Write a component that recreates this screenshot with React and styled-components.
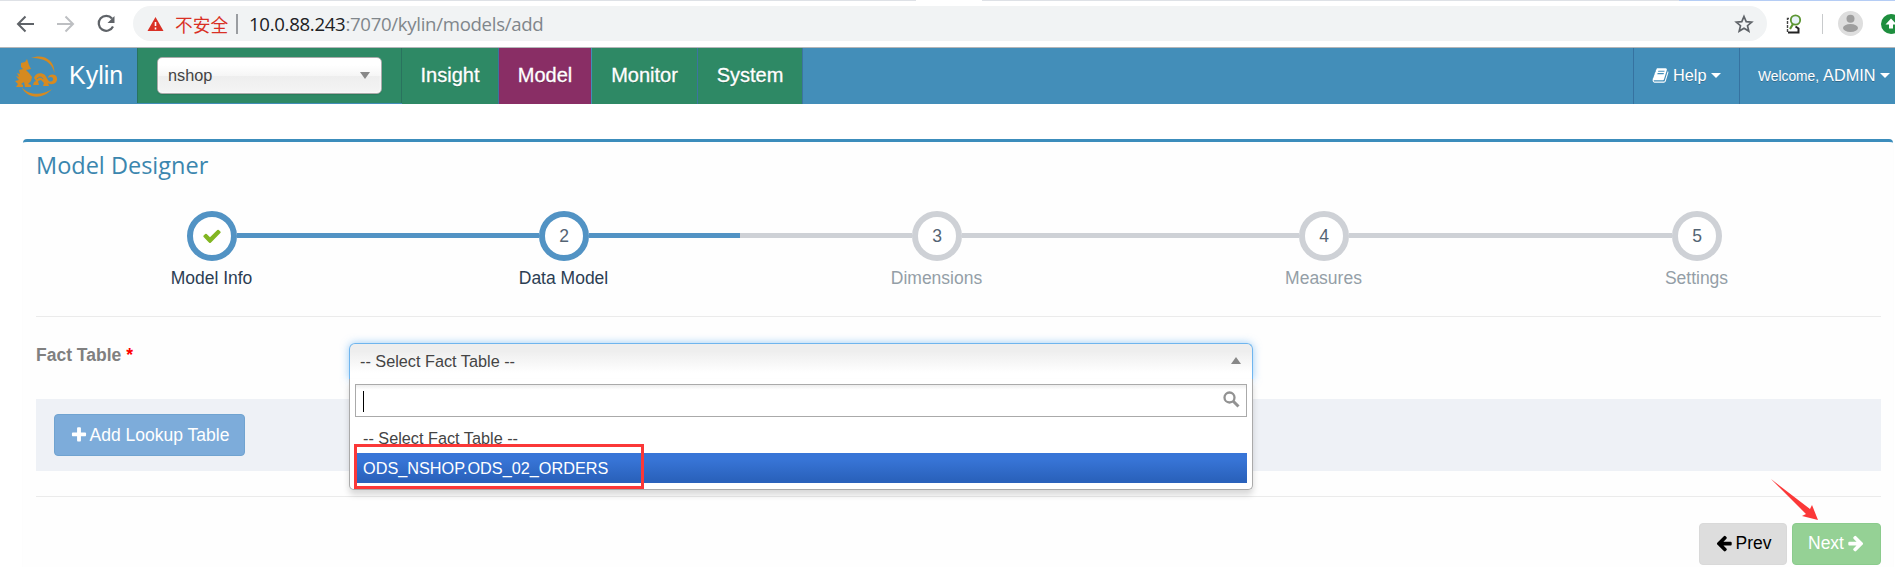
import React from "react";
import styled, { createGlobalStyle, css } from "styled-components";

const Global = createGlobalStyle`
  * { box-sizing: border-box; }
  body { margin: 0; background: #fff; font: 17.5px/25px "Liberation Sans", Arial, sans-serif; overflow: hidden; }
`;
const Page = styled.div`
  width: 1895px; height: 567px; overflow: hidden; display: flex; flex-direction: column;
`;

/* Browser chrome */
const TabStrip = styled.div`
  height: 1px; flex: none; display: grid; grid-template-columns: 916px 66px 697px 1fr;
`;
const TabEdge = styled.i`background: ${p => p.$c};`;
const Chrome = styled.div`
  height: 47px; flex: none; display: flex; align-items: flex-start; padding: 5px 0 0 15px;
  border-bottom: 1px solid #b4b6b8; background: #fff;
`;
const ChromeIcon = styled.svg`
  display: block; flex: none; width: ${p => p.$w}px; height: 35px; margin-right: ${p => p.$gap || 0}px;
`;
const Omnibox = styled.div`
  width: 1634px; height: 35px; border-radius: 18px; background: #f1f3f4; display: flex; align-items: center;
  padding: 0 13px 0 14px; margin-right: 18px; flex: none;
`;
const Insecure = styled.span`
  width: 61px; font: 17.7px/34px "Noto Sans CJK SC", sans-serif; color: #d93025; white-space: nowrap;
`;
const Separator = styled.i`width: 2px; height: 20px; background: #9a9da1; margin-right: 11px; flex: none;`;
const Url = styled.span`
  flex: 1; font: 18.6px/34px "Open Sans", "Noto Sans", sans-serif; letter-spacing: -0.3px; color: #202124; white-space: nowrap;
  span { color: #80868b; }
`;

/* Top navigation */
const Nav = styled.nav`
  height: 56px; flex: none; background: #438eb9; display: flex; color: #fff;
`;
const Brand = styled.div`
  width: 137px; display: flex; align-items: center; padding-left: 15px; font-size: 25px;
  svg { width: 43px; height: 45px; margin-right: 11px; flex: none; }
  span { padding-bottom: 2px; }
`;
const ProjectCell = styled.div`
  width: 265px; height: 55px; background: #2e8965; border-left: 1px solid #29735e; border-right: 1px solid #29735e;
  padding: 9px 0 0 19px;
`;
const ProjectSelect = styled.div`
  width: 225px; height: 37px; border-radius: 5px; padding: 0 11px 0 10px; display: flex; align-items: center; justify-content: space-between;
  border: 1px solid #aaa; font-size: 16.25px; color: #444;
  background: linear-gradient(#fff 20%, #f6f6f6 50%, #eee 52%, #f4f4f4 100%);
  box-shadow: 0 0 3px #fff inset, 0 1px 1px rgba(0,0,0,.1);
`;
const Triangle = styled.i`
  width: 0; height: 0; border: 5px solid transparent;
  ${p => p.$up
    ? css`border-top: 0; border-bottom: 7px solid #888;`
    : css`border-bottom: 0; border-top: ${p.$h || 7}px solid ${p.$c || "#888"};`}
`;
const NavItem = styled.a`
  width: ${p => p.$w}px; margin-right: ${p => p.$gap || 0}px; height: 56px; background: ${p => (p.$active ? "#892e65" : "#2e8965")};
  border-right: ${p => (p.$active ? "0" : "1px solid #3c74a0")}; text-align: center; font-size: 20px; line-height: 54px;
  text-shadow: 0 1px 0 rgba(0,0,0,.25); -webkit-text-stroke: .3px #fff;
`;
const Spacer = styled.div`flex: 1;`;
const UserItem = styled.div`
  width: ${p => p.$w}px; border-left: 1px solid #3672a0; display: flex; align-items: center; padding: 0 0 1px 18px;
  font-size: 16.25px; white-space: nowrap; text-shadow: 0 1px 0 rgba(0,0,0,.25);
  i { margin-left: 5px; }
  small { font-size: 13.8px; margin-right: 4px; padding-top: 2px; }
  svg { margin-right: 4px; }
`;

/* Main panel */
const Panel = styled.main`
  flex: 1; margin: 35px 2px 0 23px; border-top: 3px solid #3c8dbc; border-radius: 4px 4px 0 0; background: #fefefe;
  box-shadow: 0 1px 1px rgba(0,0,0,.1); padding: 0 12px 0 13px; display: flex; flex-direction: column;
`;
const Title = styled.h3`
  margin: 8px 0 0; height: 61px; font: 400 23.5px/30px "Open Sans", "Noto Sans", sans-serif; color: #3b86ae;
`;
const Steps = styled.ol`
  margin: 0 1px 0 0; padding: 0; list-style: none; height: 105px; flex: none; display: grid;
  grid-template-columns: 352px 352px 394px 380px 1fr;
`;
const Step = styled.li`
  display: grid; grid-template-columns: 1fr 50px 1fr; grid-template-rows: 50px 35px; align-items: center; justify-items: stretch;
  color: ${p => (p.$on ? "#2b3d53" : "#949ea7")};
`;
const Line = styled.i`height: 5px; margin-top: -1px; background: ${p => (p.$on ? "#5293c4" : p.$none ? "transparent" : "#ced1d6")};`;
const Dot = styled.div`
  width: 50px; height: 50px; border-radius: 50%; border: 6px solid ${p => (p.$on ? "#5293c4" : "#ced1d6")}; background: #fff;
  display: flex; align-items: center; justify-content: center; color: #546474;
`;
const StepLabel = styled.span`grid-column: 1 / 4; text-align: center; padding-right: 1px;`;
const Rule = styled.hr`margin: 0; border: 0; height: 1px; flex: none; background: #ebebeb;`;
const Field = styled.div`
  height: 82px; flex: none; display: flex; padding-top: 26px;
`;
const FieldLabel = styled.label`
  width: 313px; font-size: 17.5px; font-weight: 700; color: #808080; b { color: #f00; }
`;
const Chosen = styled.div`
  width: 904px; position: relative;
`;
const ChosenHead = styled.div`
  height: 37px; display: flex; justify-content: space-between; padding: 0 11px 1px 10px; align-items: center;
  border: 1px solid #6fb5ee; border-bottom: 0; border-radius: 6px 6px 0 0; font-size: 16.25px; color: #444;
  background: linear-gradient(#eee 20%, #fff 80%); box-shadow: 0 0 9px rgba(88,170,240,.6);
  i { margin-bottom: 2px; }
`;
const ChosenDrop = styled.div`
  position: absolute; z-index: 2; top: 36px; left: 0; width: 904px; height: 111px; background: #fff; border: 1px solid #aaa; border-top: 0;
  border-radius: 0 0 5px 5px; box-shadow: 0 5px 6px rgba(0,0,0,.15); padding: 5px 5px 0;
`;
const SearchBox = styled.div`
  height: 33px; border: 1px solid #aaa; display: flex; justify-content: space-between; padding: 6px 6px 0 7px;
  background: linear-gradient(#eee 1%, #fff 15%); margin-bottom: 6px;
`;
const Caret = styled.i`width: 1px; height: 21px; background: #000;`;
const Option = styled.div`
  height: 30px; line-height: 31px; padding-left: 7px; margin-left: 1px; font-size: 16.25px; color: #444;
  ${p => p.$hot && css`color: #fff; background: linear-gradient(#3875d7 20%, #2a62bc 90%);`}
`;
const Highlight = styled.div`
  position: absolute; z-index: 3; left: 5px; top: 101px; width: 290px; height: 45px; border: 3px solid #fb3838;
`;
const LookupBar = styled.section`
  height: 72px; flex: none; background: #eef1f6; padding: 15px 18px; margin-bottom: 25px;
`;
const Button = styled.button`
  height: 42px; width: ${p => p.$w}px; border: 1px solid ${p => p.$edge}; background: ${p => p.$bg}; color: ${p => p.$fg}; border-radius: 4px;
  font: 17.5px "Liberation Sans", Arial, sans-serif; display: flex; align-items: center; justify-content: center; gap: ${p => p.$gap || 3}px;
  padding: 0 0 ${p => p.$lift || 0}px; white-space: nowrap;
`;
const Footer = styled.footer`
  display: flex; justify-content: flex-end; gap: 5px; margin-top: 26px; position: relative;
`;
const Pointer = styled.svg`
  position: absolute; right: 61px; top: -46px; width: 52px; height: 46px;
`;

const glyphs = {
  book: "M1703 478q40 57 18 129l-275 906q-19 64-76.5 107.500t-122.500 43.500h-923q-77 0-148.500-53.500t-99.500-131.500q-24-67-2-127 0-4 3-27t4-37q1-8-3-21.500t-3-19.500q2-11 8-21t16.500-23.500 16.500-23.500q23-38 45-91.500t30-91.500q3-10 .5-30t-.5-28q3-11 17-28t17-23q21-36 42-92t25-90q1-9-2.500-32t.5-28q4-13 22-30.500t22-22.500q19-26 42.500-84.500t27.500-96.500q1-8-3-25.500t-2-26.500q2-8 9-18t18-23 17-21q8-12 16.500-30.500t15-35 16-36 19.500-32 26.500-23.500 36-11.500 47.500 5.500l-1 3q38-9 51-9h761q74 0 114 56t18 130l-274 906q-36 119-71.500 153.500t-128.500 34.500h-869q-27 0-38 15-11 16-1 43 24 70 144 70h923q29 0 56-15.500t35-41.500l300-987q7-22 5-57 38 15 59 43zm-1064 2q-4 13 2 22.500t20 9.500h608q13 0 25.500-9.500t16.500-22.500l21-64q4-13-2-22.500t-20-9.500h-608q-13 0-25.500 9.500t-16.500 22.500zm-83 256q-4 13 2 22.500t20 9.500h608q13 0 25.500-9.500t16.500-22.500l21-64q4-13-2-22.500t-20-9.500h-608q-13 0-25.500 9.500t-16.500 22.500z",
  check: "M1671 566q0 40-28 68l-724 724-136 136q-28 28-68 28t-68-28l-136-136-362-362q-28-28-28-68t28-68l136-136q28-28 68-28t68 28l294 295 656-657q28-28 68-28t68 28l136 136q28 28 28 68z",
  plus: "M1600 736v192q0 40-28 68t-68 28h-416v416q0 40-28 68t-68 28h-192q-40 0-68-28t-28-68v-416h-416q-40 0-68-28t-28-68v-192q0-40 28-68t68-28h416v-416q0-40 28-68t68-28h192q40 0 68 28t28 68v416h416q40 0 68 28t28 68z",
  arrow: "M1664 896v128q0 53-32.500 90.500t-84.500 37.500h-704l293 294q38 36 38 90t-38 90l-75 76q-37 37-90 37-52 0-91-37l-651-652q-37-37-37-90 0-52 37-91l651-650q38-38 91-38 52 0 90 38l75 74q38 38 38 91t-38 91l-293 293h704q52 0 84.500 37.500t32.500 90.500z",
};
const GlyphSvg = styled.svg`
  display: block; flex: none; width: ${p => p.$size}px; height: ${p => p.$size}px; fill: ${p => p.$color || "currentColor"};
  ${p => p.$flip && css`transform: scaleX(-1);`}
`;
const Glyph = ({ name, size = 18, color, flip }) => (
  <GlyphSvg viewBox="0 0 1792 1792" $size={size} $color={color} $flip={flip}><path d={glyphs[name]} /></GlyphSvg>
);

const Logo = () => (
  <svg viewBox="0 0 43 45" fill="#d68a20">
    <path d="M16 4C28-1 40 6 39.500 19C37 8 28 3.500 16 4ZM6.500 33C12 45 28 46 37 35C28 41.500 14 42 6.500 33Z" />
    <path d="M6 9l4-1 2-3 1 3 1 3 2 4-5 1 3 3 3 4-1 4-3 3 3 1v2h-6l-1-5-3 2 2 1v2H1l2-3-3-3 4-1-3-4 3 1-2-4 3 1-1-4 4-1-2-2z" />
    <path d="M18 31l1-3 2-1-2-3c1-5 7-6 11-3l3 5c1 2 4 2 5 0 1-3-3-4-5-2 0-4 8-5 9 0 1 5-5 8-9 5l1 3h-6l1-3-3-3-3 1 1 4z" />
    <path d="M22 25c2-3 5-2 6 0" fill="none" stroke="#438eb9" />
  </svg>
);

const steps = [
  { name: "Model Info", mark: <Glyph name="check" size={20} color="#82b622" />, on: true, right: true },
  { name: "Data Model", mark: "2", on: true, left: true, right: true },
  { name: "Dimensions", mark: "3" },
  { name: "Measures", mark: "4" },
  { name: "Settings", mark: "5" },
];

export default function App() {
  return (
    <Page>
      <Global />
      <TabStrip><TabEdge $c="#dee1e6" /><TabEdge $c="#fff" /><TabEdge $c="#dee1e6" /><TabEdge $c="#b5cdf5" /></TabStrip>
      <Chrome>
        <ChromeIcon $w={20} $gap={20} viewBox="0 0 20 35" fill="none" stroke="#5f6368" strokeWidth="2"><path d="M19 18H3M10.500 10.500L3 18l7.500 7.500" /></ChromeIcon>
        <ChromeIcon $w={20} $gap={21} viewBox="0 0 20 35" fill="none" stroke="#bdbfc2" strokeWidth="2"><path d="M2 18h16M10.500 10.500L18 18l-7.500 7.500" /></ChromeIcon>
        <ChromeIcon $w={20} $gap={17} viewBox="0 0 20 35" fill="none" stroke="#5f6368" strokeWidth="2.200"><path d="M16 12.500A7.500 7.500 0 1 0 17 20.500" /><path d="M18.500 10v7h-7z" fill="#5f6368" stroke="none" /></ChromeIcon>
        <Omnibox>
          <ChromeIcon $w={17} $gap={11} viewBox="0 0 17 35"><path d="M8.500 11l8 14H.500z" fill="#d93025" /><path d="M8.500 16v4M8.500 21.500v2" stroke="#fff" strokeWidth="1.600" /></ChromeIcon>
          <Insecure>不安全</Insecure>
          <Separator />
          <Url>10.0.88.243<span>:7070/kylin/models/add</span></Url>
          <ChromeIcon $w={20} viewBox="0 0 20 35" fill="none" stroke="#5f6368" strokeWidth="1.700"><path d="M10 10.500l2.200 5.100 5.500.500-4.200 3.600 1.300 5.400-4.800-2.900-4.800 2.900 1.300-5.400-4.200-3.600 5.500-.500z" /></ChromeIcon>
        </Omnibox>
        <ChromeIcon $w={18} $gap={19} viewBox="0 0 18 35" fill="none">
          <path d="M4 12.500H2.500v13.500h1" stroke="#444" strokeWidth="1.400" strokeDasharray="3 1" /><path d="M3 26.500h10.500v-4l-3-2" stroke="#222" strokeWidth="2" />
          <circle cx="10.500" cy="14" r="4.700" stroke="#5c9632" strokeWidth="1.800" fill="#e8f3f8" /><path d="M8 18l-3 5" stroke="#5c9632" strokeWidth="2.200" />
        </ChromeIcon>
        <ChromeIcon $w={1} $gap={15} viewBox="0 0 1 35"><path d="M.500 8v20" stroke="#c8cacc" /></ChromeIcon>
        <ChromeIcon $w={25} $gap={18} viewBox="0 0 25 35"><circle cx="12.500" cy="17.500" r="12.500" fill="#dedede" /><circle cx="12.500" cy="12.700" r="4" fill="#9e9e9e" /><ellipse cx="12.500" cy="22" rx="7.500" ry="4" fill="#9e9e9e" /></ChromeIcon>
        <ChromeIcon $w={20} viewBox="0 0 20 35"><circle cx="10" cy="18" r="10" fill="#1e8e3e" /><path d="M10 12.500l5.500 6H12v4H8v-4H4.500z" fill="#fff" /></ChromeIcon>
      </Chrome>

      <Nav>
        <Brand><Logo /><span>Kylin</span></Brand>
        <ProjectCell><ProjectSelect>nshop<Triangle /></ProjectSelect></ProjectCell>
        <NavItem $w={97}>Insight</NavItem>
        <NavItem $w={92} $gap={1} $active>Model</NavItem>
        <NavItem $w={106}>Monitor</NavItem>
        <NavItem $w={105}>System</NavItem>
        <Spacer />
        <UserItem $w={106}><Glyph name="book" size={17} />Help<Triangle $c="#fff" $h={5} /></UserItem>
        <UserItem $w={156}><small>Welcome,</small>ADMIN<Triangle $c="#fff" $h={5} /></UserItem>
      </Nav>

      <Panel>
        <Title>Model Designer</Title>
        <Steps>
          {steps.map((s, i) => (
            <Step key={s.name} $on={s.on}>
              <Line $on={s.left} $none={i === 0} />
              <Dot $on={s.on}>{s.mark}</Dot>
              <Line $on={s.right} $none={i === steps.length - 1} />
              <StepLabel>{s.name}</StepLabel>
            </Step>
          ))}
        </Steps>
        <Rule />
        <Field>
          <FieldLabel>Fact Table <b>*</b></FieldLabel>
          <Chosen>
            <ChosenHead>-- Select Fact Table --<Triangle $up /></ChosenHead>
            <ChosenDrop>
              <SearchBox>
                <Caret />
                <svg width="17" height="17" viewBox="0 0 17 17" fill="none" stroke="#929292"><circle cx="6.500" cy="6.500" r="5" strokeWidth="2.300" /><path d="M10 10l5.500 5.500" strokeWidth="3" /></svg>
              </SearchBox>
              <Option>-- Select Fact Table --</Option>
              <Option $hot>ODS_NSHOP.ODS_02_ORDERS</Option>
            </ChosenDrop>
            <Highlight />
          </Chosen>
        </Field>
        <LookupBar>
          <Button $w={191} $bg="#7dacda" $edge="#70a3d0" $fg="#fff" $gap={2}><Glyph name="plus" />Add Lookup Table</Button>
        </LookupBar>
        <Rule />
        <Footer>
          <Button $w={88} $bg="#ddd" $edge="#d9d9d9" $fg="#000" $lift={2}><Glyph name="arrow" />Prev</Button>
          <Button $w={89} $bg="#95d195" $edge="#8bcb8d" $fg="#fff" $lift={2}>Next<Glyph name="arrow" flip /></Button>
          <Pointer viewBox="0 0 52 46" fill="#fb3838"><path d="M3 2L42 32L44 28L50 43L34 39L38 37Z" /></Pointer>
        </Footer>
      </Panel>
    </Page>
  );
}
